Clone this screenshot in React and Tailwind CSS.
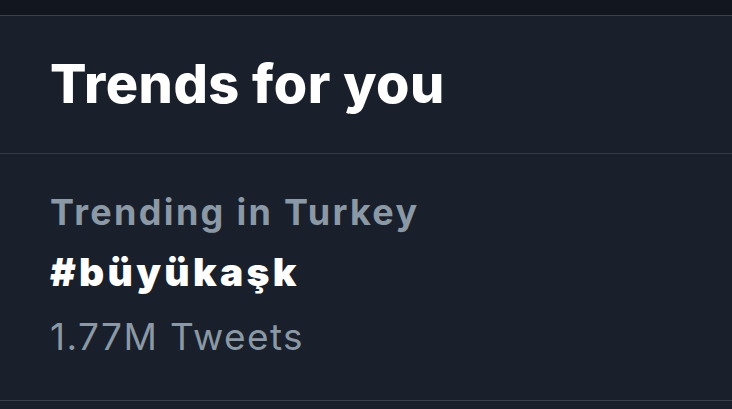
export default function App() {
  return (
    <div className="h-[409px] w-[732px] overflow-hidden bg-[#19202b] font-['Inter',sans-serif] antialiased">
      <div className="h-[16px] bg-[#12161f] border-b border-[#3a414c]" />
      <div className="border-b border-[#323a46] px-[50px] pt-[36px] pb-[37px]">
        <h2 className="text-[54px] font-extrabold leading-[64px] tracking-[0.5px] text-white">Trends for you</h2>
      </div>
      <div className="h-[247px] border-b border-[#39404b] px-[50px] pt-[38px]">
        <p className="text-[36px] font-bold leading-[40px] tracking-[2.3px] text-[#8b98a5]">Trending in Turkey</p>
        <p className="mt-[18px] text-[39px] font-black leading-[44px] tracking-[3.3px] text-white">#büyükaşk</p>
        <p className="mt-[21px] text-[37px] leading-[44px] tracking-[1.4px] text-[#8b98a5]">1.77M Tweets</p>
      </div>
    </div>
  );
}
